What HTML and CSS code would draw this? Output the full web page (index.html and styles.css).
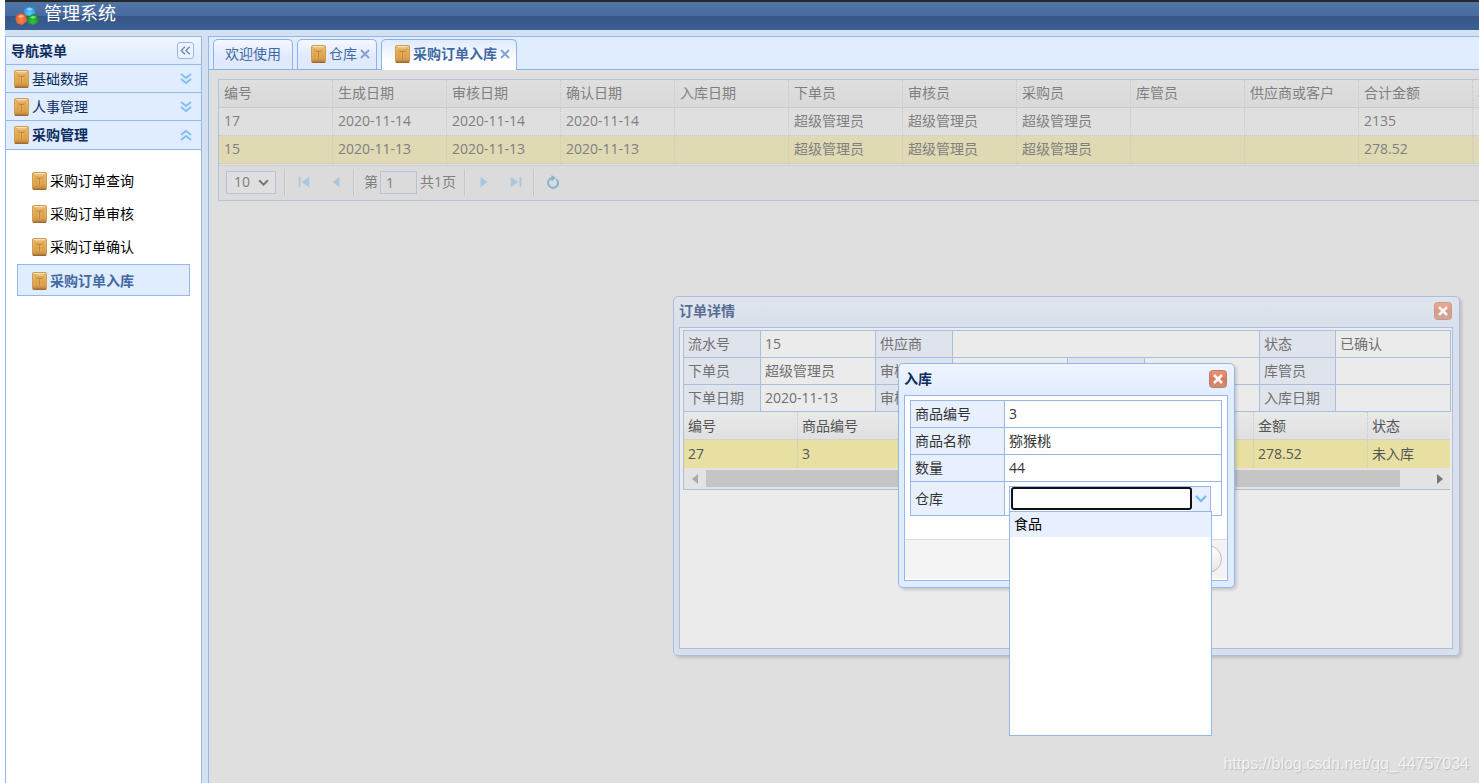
FILE: index.html
```html
<!DOCTYPE html>
<html lang="zh-CN">
<head>
<meta charset="utf-8">
<title>管理系统</title>
<link rel="stylesheet" href="styles.css">
</head>
<body>
<svg class="defs" aria-hidden="true">
  <defs>
    <linearGradient id="gold" x1="0" y1="0" x2="0" y2="1"><stop offset="0" stop-color="#f0cf94"/><stop offset=".3" stop-color="#e6b25e"/><stop offset=".75" stop-color="#dfa24c"/><stop offset="1" stop-color="#b57a3c"/></linearGradient>
    <linearGradient id="red" x1="0" y1="0" x2="0" y2="1"><stop offset="0" stop-color="#ef9673"/><stop offset=".5" stop-color="#dd7a5c"/><stop offset="1" stop-color="#c89078"/></linearGradient>
    <radialGradient id="blue" cx=".5" cy=".7" r=".7"><stop offset="0" stop-color="#5ccdfa"/><stop offset="1" stop-color="#1e86d8"/></radialGradient>
    <radialGradient id="orange" cx=".5" cy=".6" r=".7"><stop offset="0" stop-color="#ff8a4c"/><stop offset="1" stop-color="#d8481c"/></radialGradient>
    <radialGradient id="green" cx=".5" cy=".7" r=".7"><stop offset="0" stop-color="#36c440"/><stop offset="1" stop-color="#0d8a20"/></radialGradient>
    <symbol id="box" viewBox="0 0 15 18">
      <rect x=".5" y=".5" width="14" height="17" rx="1" fill="url(#gold)" stroke="#cc9c58"/>
      <path d="M1 1.500h13" stroke="#f8e0b0"/>
      <path d="M1 1l3 4v10l-3 2M14 1l-3 4v10l3 2M4 5h7" fill="none" stroke="#cf9848" stroke-width=".7"/>
      <path d="M5 6.500h5M7.500 6.500V14" stroke="#bf8438" stroke-width=".9"/>
      <path d="M1 17.300h13" stroke="#8f5f30"/>
    </symbol>
    <symbol id="down2" viewBox="0 0 12 12"><path d="M1 1l5 4 5-4M1 6l5 4 5-4" fill="none" stroke="#7fbff0" stroke-width="1.800"/></symbol>
    <symbol id="up2" viewBox="0 0 12 12"><path d="M1 6l5-4 5 4M1 11l5-4 5 4" fill="none" stroke="#7fbff0" stroke-width="1.800"/></symbol>
    <symbol id="close" viewBox="0 0 18 18"><rect x=".5" y=".5" width="17" height="17" rx="3" fill="url(#red)" stroke="#bd7c66"/><path d="M5 5l8 8M13 5l-8 8" stroke="#fff" stroke-width="2.500"/></symbol>
    <symbol id="cross" viewBox="0 0 10 10"><path d="M1 1l8 8M9 1L1 9" stroke="#7f9fd0" stroke-width="1.800"/></symbol>
  </defs>
</svg>
<div class="app">
  <header class="header">
    <svg class="logo" viewBox="0 0 24 20">
      <path d="M10 1.500L14 0l5 1.500L20.500 7 16 10.500 10.500 9 8.500 5z" fill="url(#blue)"/><path d="M11 3l3.500-1.500L18 3l-3.500 2z" fill="#a5e4ff" opacity=".8"/>
      <path d="M1 9.500L6 7l5 2 1 6-4.500 4L2 17.500.5 13z" fill="url(#orange)"/><path d="M2.500 10.500L6 8.500l3.500 1.500L6 12z" fill="#ffc09a" opacity=".8"/>
      <path d="M13 11l5-3 4.500 2 1 5-4.500 4-5.500-1.500-1.500-4z" fill="url(#green)"/><path d="M14.500 11.500L18 9.500l3.500 1.500-3.500 2z" fill="#8be88a" opacity=".8"/>
    </svg>
    <h1>管理系统</h1>
  </header>
  <div class="body">
    <nav class="side">
      <div class="side-title"><span>导航菜单</span>
        <button class="collapse" aria-label="收起"><svg viewBox="0 0 16 16"><path d="M7.500 4l-4 4 4 4M12.500 4l-4 4 4 4" fill="none" stroke="#6b8dbd" stroke-width="1.600"/></svg></button></div>
      <button class="acc"><svg class="box"><use href="#box"/></svg><span>基础数据</span><svg class="arr"><use href="#down2"/></svg></button>
      <button class="acc"><svg class="box"><use href="#box"/></svg><span>人事管理</span><svg class="arr"><use href="#down2"/></svg></button>
      <button class="acc open"><svg class="box"><use href="#box"/></svg><span>采购管理</span><svg class="arr"><use href="#up2"/></svg></button>
      <div class="menu">
        <a href="#"><svg class="box"><use href="#box"/></svg>采购订单查询</a>
        <a href="#"><svg class="box"><use href="#box"/></svg>采购订单审核</a>
        <a href="#"><svg class="box"><use href="#box"/></svg>采购订单确认</a>
        <a href="#" class="on"><svg class="box"><use href="#box"/></svg>采购订单入库</a>
      </div>
    </nav>
    <main class="main">
      <div class="tabs">
        <button class="tab">欢迎使用</button>
        <button class="tab icon"><svg class="box"><use href="#box"/></svg>仓库<svg class="x"><use href="#cross"/></svg></button>
        <button class="tab icon on"><svg class="box"><use href="#box"/></svg>采购订单入库<svg class="x"><use href="#cross"/></svg></button>
      </div>
      <div class="content">
        <section class="panel">
          <table class="grid">
            <thead><tr><th>编号</th><th>生成日期</th><th>审核日期</th><th>确认日期</th><th>入库日期</th><th>下单员</th><th>审核员</th><th>采购员</th><th>库管员</th><th>供应商或客户</th><th>合计金额</th><th>状态</th></tr></thead>
            <tbody>
              <tr><td>17</td><td>2020-11-14</td><td>2020-11-14</td><td>2020-11-14</td><td></td><td>超级管理员</td><td>超级管理员</td><td>超级管理员</td><td></td><td></td><td>2135</td><td></td></tr>
              <tr class="sel"><td>15</td><td>2020-11-13</td><td>2020-11-13</td><td>2020-11-13</td><td></td><td>超级管理员</td><td>超级管理员</td><td>超级管理员</td><td></td><td></td><td>278.52</td><td></td></tr>
            </tbody>
          </table>
          <div class="pager">
            <span class="size"><select aria-label="每页条数"><option>10</option></select><svg viewBox="0 0 10 6"><path d="M1 1l4 4 4-4" fill="none" stroke="#777" stroke-width="1.800"/></svg></span>
            <i class="sep"></i>
            <button aria-label="首页"><svg viewBox="0 0 12 12"><path d="M1.500 1.500h1.500v9H1.500zM10.500 1.500v9L4 6z"/></svg></button>
            <button aria-label="上一页"><svg viewBox="0 0 12 12"><path d="M9 1.500v9L3 6z"/></svg></button>
            <i class="sep"></i>
            <label class="page">第<input value="1"></label><span class="total">共1页</span>
            <i class="sep"></i>
            <button aria-label="下一页"><svg viewBox="0 0 12 12"><path d="M3 1.500v9L9 6z"/></svg></button>
            <button aria-label="末页"><svg viewBox="0 0 12 12"><path d="M1.500 1.500v9L8 6zM9 1.500h1.500v9H9z"/></svg></button>
            <i class="sep"></i>
            <button aria-label="刷新"><svg viewBox="0 0 14 14"><path d="M10.500 4.200A5 5 0 1 1 6 3" fill="none" stroke="#84b5d4" stroke-width="2"/><path d="M5.500 0l4.500 3-4.500 3.200z" fill="#84b5d4"/></svg></button>
          </div>
        </section>
      </div>
    </main>
  </div>

  <section class="win detail">
    <div class="win-title"><h2>订单详情</h2><button aria-label="关闭"><svg><use href="#close"/></svg></button></div>
    <div class="win-body">
      <table class="form">
        <colgroup><col class="c1"><col class="c2"><col class="c1"><col class="c2"><col class="c1"><col class="c2"><col class="c3"><col class="c2"></colgroup>
        <tr><th>流水号</th><td>15</td><th>供应商</th><td colspan="3"></td><th>状态</th><td>已确认</td></tr>
        <tr><th>下单员</th><td>超级管理员</td><th>审核员</th><td></td><th></th><td></td><th>库管员</th><td></td></tr>
        <tr><th>下单日期</th><td>2020-11-13</td><th>审核日期</th><td></td><th></th><td></td><th>入库日期</th><td></td></tr>
      </table>
      <div class="items">
        <table class="grid">
          <thead><tr><th>编号</th><th>商品编号</th><th></th><th></th><th></th><th>金额</th><th>状态</th></tr></thead>
          <tbody><tr class="sel"><td>27</td><td>3</td><td></td><td></td><td></td><td>278.52</td><td>未入库</td></tr></tbody>
        </table>
        <div class="scroll"><svg viewBox="0 0 6 10"><path d="M6 0v10L0 5z" fill="#aaa"/></svg><span class="track"><i></i></span><svg viewBox="0 0 6 10"><path d="M0 0v10l6-5z" fill="#777"/></svg></div>
      </div>
    </div>
  </section>

  <section class="win stock">
    <div class="win-title"><h2>入库</h2><button aria-label="关闭"><svg><use href="#close"/></svg></button></div>
    <div class="win-body">
      <table class="form">
        <tr><th>商品编号</th><td>3</td></tr>
        <tr><th>商品名称</th><td>猕猴桃</td></tr>
        <tr><th>数量</th><td>44</td></tr>
        <tr class="tall"><th><label for="store">仓库</label></th><td>
          <div class="combo"><input id="store" type="text"><button aria-label="展开"><svg viewBox="0 0 12 8"><path d="M1 1l5 5 5-5" fill="none" stroke="#78bdf0" stroke-width="2.400"/></svg></button>
            <ul class="drop"><li>食品</li></ul>
          </div></td></tr>
      </table>
      <div class="foot"><button class="pill" aria-label="确定"></button></div>
    </div>
  </section>
  <div class="mark">https://blog.csdn.net/qq_44757034</div>
</div>
</body>
</html>
```
FILE: styles.css
```css
* { box-sizing: border-box; }
body { margin: 0; background: #fff; font: 14px/20px "Open Sans", "Noto Sans CJK SC", sans-serif; color: #333; }
button, input, select { font: inherit; color: inherit; padding: 0; margin: 0; border: 0; background: none; }
h1, h2 { margin: 0; }
svg { display: block; flex: none; }
.defs { position: absolute; width: 0; height: 0; }
.app { position: relative; height: 100vh; padding-left: 5px; overflow: hidden; display: flex; flex-direction: column; }
.header { height: 30px; flex: none; display: flex; align-items: center; gap: 5px; padding: 0 10px; border-top: 2px solid #272727;
  background: linear-gradient(#4f74a6, #486b9f 50%, #375685 51%, #3a5f96); color: #fff; }
.header h1 { font-size: 18px; line-height: 24px; font-weight: 400; padding-bottom: 6px; }
.logo { width: 24px; height: 20px; }
.body { flex: 1; min-height: 0; display: flex; gap: 6px; padding-top: 6px; background: #d3e0f2; }
.box { width: 15px; height: 18px; }

.side { width: 197px; flex: none; border: 1px solid #95b8e7; border-bottom: 0; background: #fff; }
.side-title { height: 28px; display: flex; align-items: center; justify-content: space-between; padding: 0 7px 0 5px; border-bottom: 1px solid #95b8e7;
  background: linear-gradient(#f0f6ff, #dfeaff); color: #0e2d5f; font-weight: 700; font-size: 14px; }
.collapse { width: 17px; height: 17px; border: 1px solid #95b8e7; border-radius: 3px; background: #edf4ff; }
.acc { width: 100%; height: 28px; display: flex; align-items: center; gap: 3px; padding: 0 9px 0 8px; border-bottom: 1px solid #95b8e7; background: #e0ecff; color: #0e2d5f; text-align: left; }
.acc span { flex: 1; }
.acc.open { height: 29px; font-weight: 700; }
.arr { width: 12px; height: 12px; }
.menu { display: flex; flex-direction: column; gap: 1px; padding: 15px 11px; }
.menu a { height: 32px; display: flex; align-items: center; gap: 3px; padding: 0 14px; border: 1px solid transparent; color: #000; text-decoration: none; }
.menu a.on { padding-top: 2px; border-color: #95b8e7; background: #e0ecff; color: #416aa3; font-weight: 700; }

.main { flex: 1; min-width: 0; border: 1px solid #95b8e7; border-width: 1px 0 0 1px; display: flex; flex-direction: column; background: #dfdfdf; }
.tabs { height: 33px; flex: none; display: flex; align-items: flex-end; gap: 4px; padding-left: 4px; border-bottom: 1px solid #8db2e3; background: #e0ecff; }
.tab { height: 30px; display: flex; align-items: center; padding: 0 11px 2px; border: 1px solid #8db2e3; border-bottom: 0; border-radius: 5px 5px 0 0;
  background: linear-gradient(#f4f8ff, #e0eaff 60%, #dfe9fd); color: #416aa3; }
.tab.icon { gap: 3px; padding: 0 6px 2px 13px; }
.tab.on { height: 31px; margin-bottom: -1px; font-weight: 700; background: linear-gradient(#e0ebff, #fff 70%); }
.x { width: 10px; height: 10px; }
.content { flex: 1; min-height: 0; padding: 9px 0 0 9px; overflow: hidden; }
.panel { border: 1px solid #b5c3dc; border-right: 0; overflow: hidden; color: #808080; }
.grid { width: max-content; table-layout: fixed; border-collapse: separate; border-spacing: 0; }
.grid th, .grid td { width: 114px; min-width: 114px; height: 28px; padding: 0 5px; text-align: left; font-weight: 400; white-space: nowrap; border-right: 1px dotted #c9c9c9; border-bottom: 1px dotted #c9c9c9; }
.panel .grid th, .panel .grid td { padding-bottom: 2px; }
.grid th { border-bottom: 1px solid #ccc; background: linear-gradient(#dfdfdf, #d9d9d9); }
.grid .sel td { background: #dfd9b4; }
.pager { height: 35px; display: flex; align-items: center; margin-top: 1px; padding: 0 0 2px 7px; border-top: 1px solid #d1d1d1; background: #dbdbdb; }
.size { position: relative; width: 50px; height: 23px; border: 1px solid #b5c3dc; background: #dfdfdf; }
.size select { width: 100%; height: 100%; padding-left: 7px; appearance: none; }
.size svg { position: absolute; right: 6px; top: 7px; width: 11px; height: 7px; }
.sep { width: 2px; height: 27px; margin: 0 2px 0 1px; border-left: 1px solid #c6c6c6; border-right: 1px solid #e2e2e2; }
.size + .sep, .total + .sep { margin-left: 8px; }
.pager button { width: 32px; display: flex; justify-content: center; }
.pager button svg { width: 14px; height: 14px; fill: #adc8dc; }
.page { display: flex; align-items: center; gap: 2px; padding-left: 7px; }
.page input { width: 37px; height: 23px; padding-left: 5px; border: 1px solid #b5c3dc; }
.total { padding-left: 3px; }

.win { position: absolute; display: flex; flex-direction: column; padding: 5px 6px 6px 5px; border: 1px solid #95b8e7; border-radius: 5px; background: linear-gradient(#eff5ff, #e0ecff 32px); box-shadow: 2px 2px 3px rgba(0, 0, 0, .15); }
.win-title { display: flex; flex: none; justify-content: space-between; }
.win-title h2 { font-size: 14px; line-height: 18px; font-weight: 700; color: #0e2d5f; }
.win-title button, .win-title svg { width: 18px; height: 18px; }
.win-title button { margin-right: 1px; }
.win-body { flex: 1; border: 1px solid #95b8e7; background: #fff; }
.form { border-collapse: collapse; table-layout: fixed; }
.form th, .form td { height: 27px; padding: 0 4px; border: 1px solid #95b8e7; font-weight: 400; text-align: left; white-space: nowrap; }
.form th { background: #e8f0ff; }

.detail { left: 673px; top: 296px; width: 787px; height: 360px; border-color: #abbfdd; background: linear-gradient(#e0e4ec, #d9e0ec 32px); }
.detail .win-title { height: 25px; }
.detail .win-title h2 { color: #566e92; }
.detail .win-title svg { opacity: .7; }
.detail .win-body { padding: 2px 2px 0 3px; border-color: #abbfdd; background: #ebebeb; }
.detail .form { width: 100%; color: #707070; }
.detail .form th, .detail .form td { border-color: #abbfdd; }
.detail .form th { background: #dfe3ec; }
.c1 { width: 77px; }
.c2 { width: 115px; }
.c3 { width: 76px; }
.items { border: 1px solid #abbfdd; border-width: 0 0 1px 1px; overflow: hidden; color: #555; }
.items .grid th, .items .grid td { padding-left: 4px; }
.items .grid th { border-bottom-color: #d2d2d2; background: linear-gradient(#e9e9e9, #e0e0e0); }
.items .grid .sel td { background: #e8e0a2; border-bottom: 0; }
.scroll { height: 21px; display: flex; align-items: center; gap: 8px; padding: 0 7px 0 8px; background: #e3e3e3; }
.scroll svg { width: 6px; height: 10px; }
.track { flex: 1; height: 17px; }
.track i { display: block; width: 96%; height: 100%; background: #c5c5c5; }

.stock { left: 898px; top: 363px; width: 337px; height: 225px; }
.stock .win-title { height: 26px; padding-top: 1px; }
.stock .win-body { display: flex; flex-direction: column; padding-bottom: 2px; }
.stock .form { width: 312px; margin: 4px 5px 0; }
.stock th { width: 94px; }
.stock .form .tall td, .stock .form .tall th { height: 34px; }
.combo { position: relative; width: 202px; height: 26px; display: flex; padding: 0 1px 1px; border: 1px solid #95b8e7; }
.combo input { flex: 1; min-width: 0; border: 2px solid #111; border-radius: 3px; outline: 0; background: #fff; padding: 0 4px; }
.combo button { width: 18px; margin: 0 -1px -1px 0; display: flex; align-items: center; justify-content: center; background: #e8f0ff; }
.combo button svg { width: 12px; height: 8px; }
.drop { position: absolute; left: -1px; top: 24px; width: 203px; height: 225px; margin: 0; padding: 0; list-style: none; border: 1px solid #95b8e7; background: #fff; color: #000; }
.drop li { height: 25px; padding: 2px 4px; background: #e8f0ff; }
.foot { height: 39px; margin-top: auto; display: flex; align-items: center; justify-content: flex-end; padding-right: 5px; border-top: 1px solid #ddd; background: #f3f3f3; }
.pill { width: 64px; height: 28px; border: 1px solid #bbb; border-radius: 14px; background: linear-gradient(#fff, #e6e6e6); }
.mark { position: absolute; right: 10px; bottom: 9px; font: 16px/20px "Liberation Sans", sans-serif; color: #f2f2f2; text-shadow: 1px 1px 1px #bbb; }
```
